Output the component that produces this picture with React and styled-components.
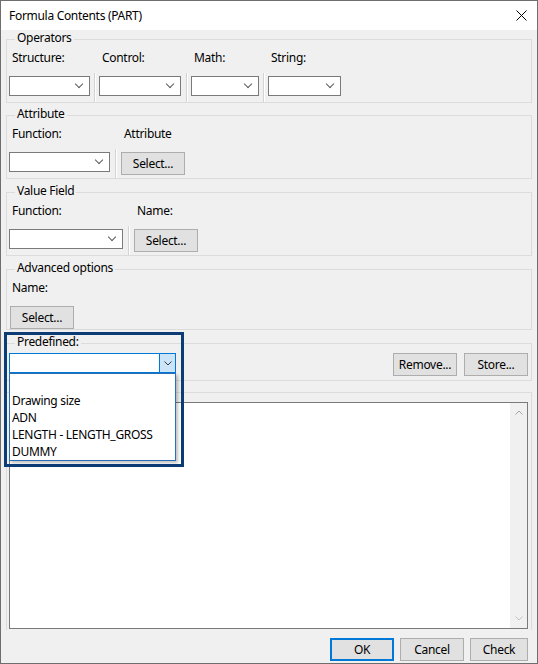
import React from 'react';
import styled, { createGlobalStyle } from 'styled-components';

const GlobalStyle = createGlobalStyle`
  * { box-sizing: border-box; }
  body {
    margin: 0;
    background: #ffffff;
    font-family: "Segoe UI", "Noto Sans", "Liberation Sans", sans-serif;
    font-size: 12px;
    letter-spacing: -0.3px;
    color: #000;
  }
`;

const Chevron = ({ color = '#5c5c5c', up = false }) => (
  <svg width="8" height="5" viewBox="0 0 8 5">
    <path
      d={up ? 'M0.5 4.5 L4 1 L7.5 4.5' : 'M0.5 0.5 L4 4 L7.5 0.5'}
      fill="none"
      stroke={color}
      strokeWidth="1"
    />
  </svg>
);

const Predefined = ['', 'Drawing size', 'ADN', 'LENGTH - LENGTH_GROSS', 'DUMMY'];

const App = () => {
  return (
    <>
      <GlobalStyle />
      <Window>
        <TitleBar>
          <Title>Formula Contents (PART)</Title>
          <CloseButton>
            <svg width="11" height="11" viewBox="0 0 11 11">
              <path d="M0.5 0.5 L10.5 10.5 M10.5 0.5 L0.5 10.5" stroke="#000" strokeWidth="1" />
            </svg>
          </CloseButton>
        </TitleBar>

        <Body>
          <Group>
            <Legend>Operators</Legend>
            <Columns>
              <Column>
                <Label>Structure:</Label>
                <CtrlRow>
                  <Combo $w={81} />
                </CtrlRow>
              </Column>
              <Separator $ml={4} $mr={3} />
              <Column>
                <Label>Control:</Label>
                <CtrlRow>
                  <Combo $w={82} />
                </CtrlRow>
              </Column>
              <Separator $ml={5} $mr={3} />
              <Column>
                <Label>Math:</Label>
                <CtrlRow>
                  <Combo $w={68} />
                </CtrlRow>
              </Column>
              <Separator $ml={4} $mr={3} />
              <Column>
                <Label>String:</Label>
                <CtrlRow>
                  <Combo $w={73} />
                </CtrlRow>
              </Column>
            </Columns>
          </Group>

          <Group $mt={3}>
            <Legend>Attribute</Legend>
            <Columns>
              <Column>
                <Label>Function:</Label>
                <CtrlRow>
                  <Combo $w={101} />
                </CtrlRow>
              </Column>
              <Separator $ml={5} $mr={4} />
              <Column>
                <Label>Attribute</Label>
                <CtrlRow>
                  <Button>Select...</Button>
                </CtrlRow>
              </Column>
            </Columns>
          </Group>

          <Group $mt={4}>
            <Legend>Value Field</Legend>
            <Columns>
              <Column>
                <Label>Function:</Label>
                <CtrlRow>
                  <Combo $w={114} />
                </CtrlRow>
              </Column>
              <Separator $ml={5} $mr={4} />
              <Column>
                <Label>Name:</Label>
                <CtrlRow>
                  <Button>Select...</Button>
                </CtrlRow>
              </Column>
            </Columns>
          </Group>

          <Group $mt={4}>
            <Legend>Advanced options</Legend>
            <Column>
              <Label>Name:</Label>
              <CtrlRow $h={26}>
                <Button $ml={1}>Select...</Button>
              </CtrlRow>
            </Column>
          </Group>

          <Group $mt={4} $pb={4}>
            <Legend>Predefined:</Legend>
            <PredefRow>
              <ComboWrap>
                <Combo $w={167} $focused>
                  <DropButton>
                    <Chevron color="#3c3c3c" />
                  </DropButton>
                </Combo>
                <DropList>
                  {Predefined.map((item, i) => (
                    <DropItem key={i}>{item}</DropItem>
                  ))}
                </DropList>
              </ComboWrap>
              <Spacer />
              <Button>Remove...</Button>
              <Button>Store...</Button>
            </PredefRow>
          </Group>

          <FormulaGroup>
            <TextArea>
              <ScrollBar>
                <Chevron color="#a6a6a6" up />
                <Chevron color="#c2c2c2" />
              </ScrollBar>
            </TextArea>
          </FormulaGroup>

          <Footer>
            <Button $default>OK</Button>
            <Button>Cancel</Button>
            <Button $w={58}>Check</Button>
          </Footer>
        </Body>

        <Highlight />
      </Window>
    </>
  );
};

export default App;

// Styled Components
const Window = styled.div`
  position: relative;
  width: 538px;
  height: 664px;
  border: 1px solid #6e6e6e;
  display: flex;
  flex-direction: column;
  background: #f0f0f0;
  overflow: hidden;
`;

const TitleBar = styled.div`
  height: 29px;
  flex-shrink: 0;
  background: #ffffff;
  display: flex;
  align-items: center;
  padding: 0 0 0 8px;
`;

const Title = styled.div`
  flex: 1;
  font-size: 12px;
  line-height: 16px;
`;

const CloseButton = styled.div`
  width: 46px;
  height: 29px;
  display: flex;
  align-items: center;
  justify-content: center;
  margin-right: -1px;
  padding-left: 13px;
`;

const Body = styled.div`
  flex: 1;
  display: flex;
  flex-direction: column;
  padding: 0 5px 2px 5px;
`;

const Group = styled.fieldset`
  margin: ${({ $mt }) => $mt || 0}px 0 0 0;
  border: 1px solid #dcdcdc;
  padding: 0 3px ${({ $pb }) => $pb || 0}px 2px;
  min-width: 0;
`;

const Legend = styled.legend`
  padding: 0 2px 4px 2px;
  margin-left: 6px;
  line-height: 15px;
  font-size: 12px;
`;

const Columns = styled.div`
  display: flex;
  align-items: stretch;
`;

const Column = styled.div`
  display: flex;
  flex-direction: column;
`;

const Label = styled.div`
  line-height: 16px;
  padding: 1px 0 0 3px;
  margin-bottom: 7px;
  white-space: nowrap;
`;

const CtrlRow = styled.div`
  height: ${({ $h }) => $h || 29}px;
  display: flex;
  align-items: flex-start;
  padding-top: 3px;
`;

const Separator = styled.div`
  align-self: flex-end;
  width: 2px;
  height: 29px;
  margin-left: ${({ $ml }) => $ml}px;
  margin-right: ${({ $mr }) => $mr}px;
  border-left: 1px solid #d3d3d3;
  border-right: 1px solid #ffffff;
`;

const Combo = styled.div`
  position: relative;
  width: ${({ $w }) => $w}px;
  height: 20px;
  background: #ffffff;
  border: 1px solid ${({ $focused }) => ($focused ? '#0078d7' : '#7a7a7a')};
  display: flex;
  justify-content: flex-end;
  align-items: center;
  padding-right: 6px;

  ${({ $focused }) =>
    $focused
      ? 'padding-right: 0; align-items: stretch;'
      : `&::after {
          content: '';
          width: 5px;
          height: 5px;
          border-right: 1px solid #5c5c5c;
          border-bottom: 1px solid #5c5c5c;
          transform: translateY(-2px) rotate(45deg);
          margin-right: 1px;
        }`}
`;

const DropButton = styled.div`
  width: 16px;
  background: #cce4f7;
  border-left: 1px solid #0078d7;
  display: flex;
  align-items: center;
  justify-content: center;
`;

const Button = styled.div`
  width: ${({ $w }) => $w || 64}px;
  height: 23px;
  margin-left: ${({ $ml }) => $ml || 0}px;
  background: #e1e1e1;
  border: ${({ $default }) => ($default ? '2px solid #0078d7' : '1px solid #adadad')};
  display: flex;
  align-items: center;
  justify-content: center;
  font-size: 12px;
  padding-bottom: 1px;
  flex-shrink: 0;
`;

const PredefRow = styled.div`
  display: flex;
  align-items: flex-start;
  gap: 7px;
`;

const ComboWrap = styled.div`
  position: relative;
`;

const Spacer = styled.div`
  flex: 1;
`;

const DropList = styled.div`
  position: absolute;
  top: 20px;
  left: 0;
  width: 167px;
  z-index: 5;
  background: #ffffff;
  border: 1px solid #2a6fb5;
  box-shadow: 2px 2px 3px rgba(0, 0, 0, 0.25);
  padding: 1px 0 0 0;
`;

const DropItem = styled.div`
  height: 17px;
  line-height: 17px;
  padding-left: 2px;
  white-space: nowrap;
`;

const FormulaGroup = styled.fieldset`
  flex: 1;
  margin: 11px 0 0 0;
  border: 1px solid #dcdcdc;
  border-bottom: none;
  padding: 9px 3px 1px 2px;
  display: flex;
  min-width: 0;
`;

const TextArea = styled.div`
  flex: 1;
  background: #ffffff;
  border: 1px solid #7a7a7a;
  display: flex;
  justify-content: flex-end;
`;

const ScrollBar = styled.div`
  width: 17px;
  background: #f0f0f0;
  display: flex;
  flex-direction: column;
  justify-content: space-between;
  align-items: center;
  padding: 7px 0 7px 0;
`;

const Footer = styled.div`
  display: flex;
  justify-content: flex-end;
  gap: 6px;
  padding: 8px 4px 0 0;
`;

const Highlight = styled.div`
  position: absolute;
  left: 3px;
  top: 331px;
  width: 180px;
  height: 135px;
  border: 3px solid #0b3c76;
  pointer-events: none;
  z-index: 10;
`;
